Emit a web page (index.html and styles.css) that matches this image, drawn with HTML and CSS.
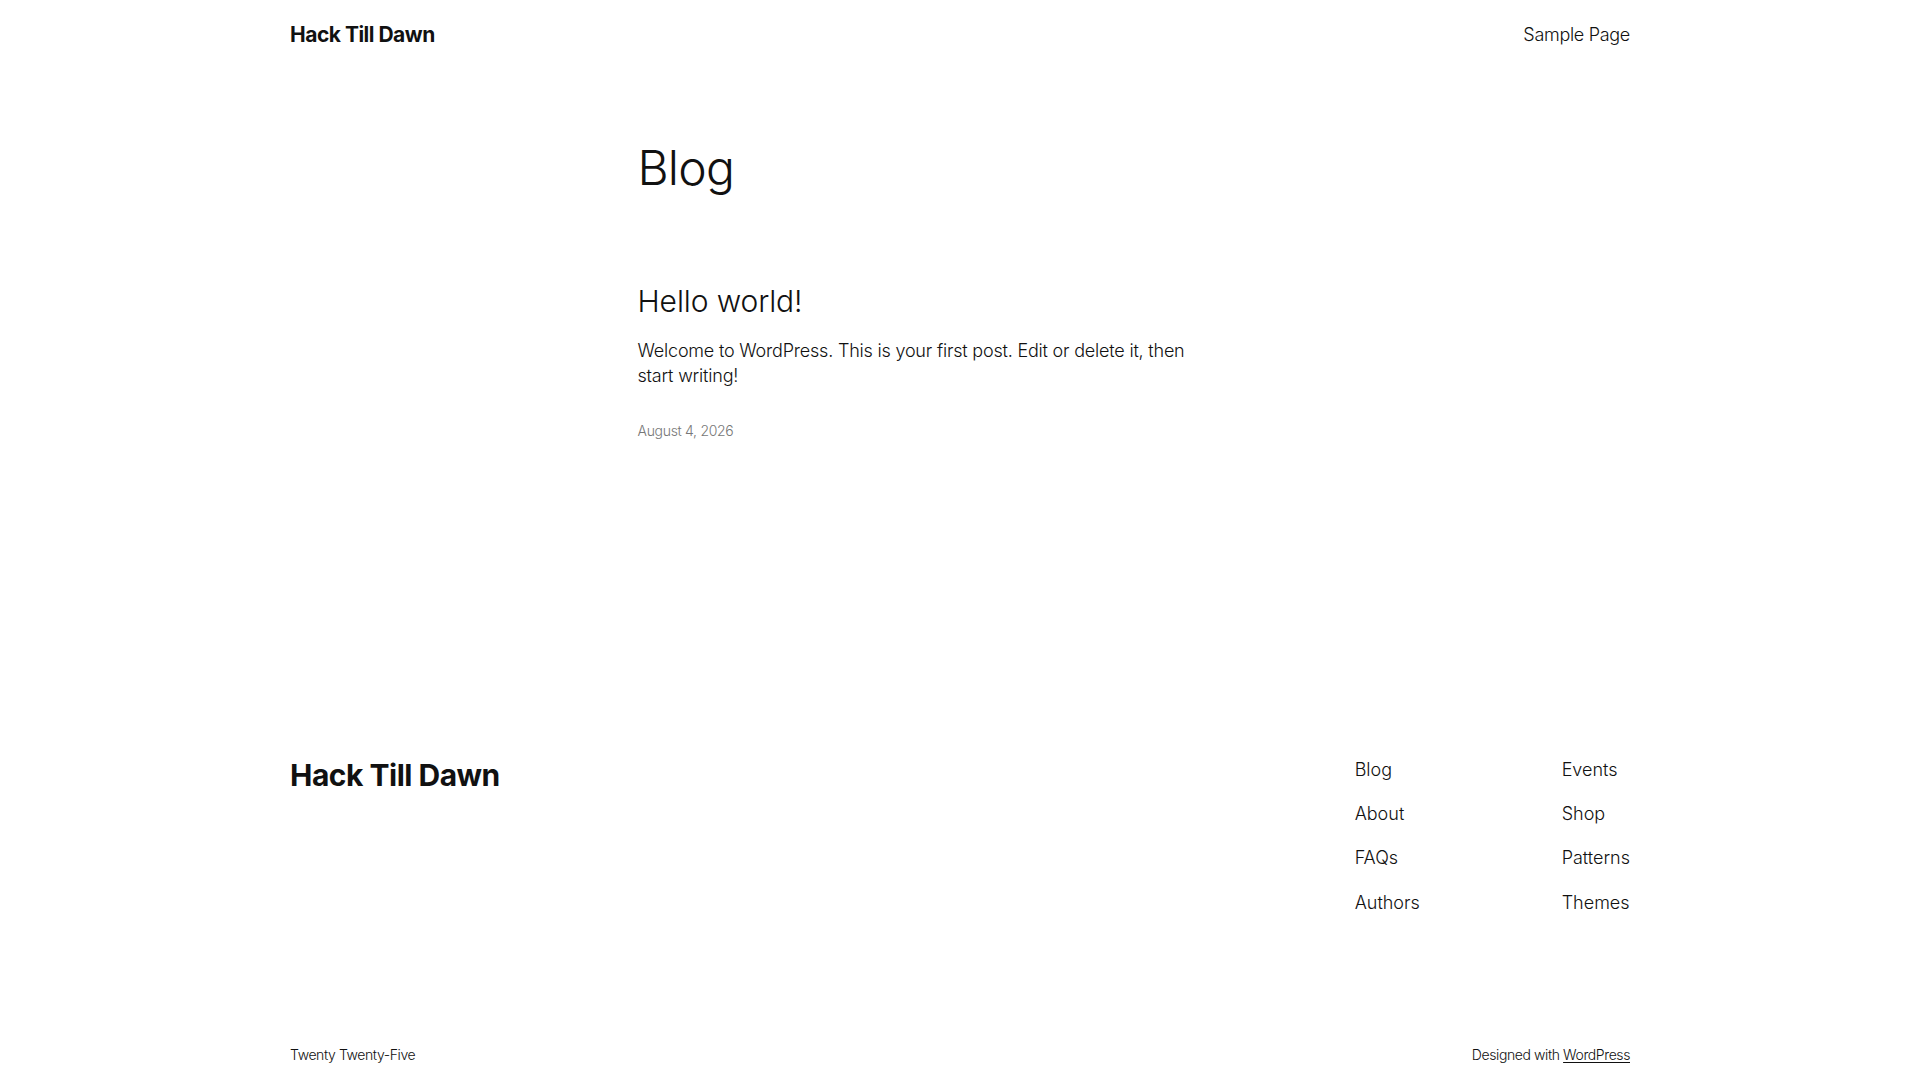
FILE: index.html
```html
<!DOCTYPE html>
<html lang="en">
<head>
<meta charset="utf-8">
<title>Blog – Hack Till Dawn</title>
<link rel="stylesheet" href="styles.css">
</head>
<body>
<header class="site-header">
  <a class="site-title" href="#">Hack Till Dawn</a>
  <nav class="header-nav"><a href="#">Sample Page</a></nav>
</header>
<main class="site-main">
  <h1 class="page-title">Blog</h1>
  <article class="post">
    <h2 class="post-title"><a href="#">Hello world!</a></h2>
    <p class="post-excerpt">Welcome to WordPress. This is your first post. Edit or delete it, then start writing!</p>
    <div class="post-date">August 4, 2026</div>
  </article>
</main>
<footer class="site-footer">
  <div class="footer-top">
    <a class="footer-title" href="#">Hack Till Dawn</a>
    <nav class="footer-nav">
      <ul class="footer-col">
        <li><a href="#">Blog</a></li>
        <li><a href="#">About</a></li>
        <li><a href="#">FAQs</a></li>
        <li><a href="#">Authors</a></li>
      </ul>
      <ul class="footer-col">
        <li><a href="#">Events</a></li>
        <li><a href="#">Shop</a></li>
        <li><a href="#">Patterns</a></li>
        <li><a href="#">Themes</a></li>
      </ul>
    </nav>
  </div>
  <div class="footer-bottom">
    <span class="credit">Twenty Twenty-Five</span>
    <span class="credit">Designed with <a class="wp-link" href="#">WordPress</a></span>
  </div>
</footer>
</body>
</html>
```

FILE: styles.css
```css
* { box-sizing: border-box; }
html, body { margin: 0; padding: 0; background: #fff; }
body {
  font-family: Inter, "Noto Sans", sans-serif;
  font-weight: 300;
  color: #111111;
  -webkit-font-smoothing: antialiased;
}
a { color: inherit; text-decoration: none; }

.site-header {
  width: 1340px;
  margin: 0 auto;
  padding: 20px 0 20px;
  display: flex;
  justify-content: space-between;
  align-items: center;
}
.site-title {
  font-size: 21px;
  line-height: 1.4;
  font-weight: 700;
  letter-spacing: -0.5px;
}
.header-nav a {
  font-size: 18px;
  line-height: 1.4;
  font-weight: 300;
  letter-spacing: -0.3px;
}

.site-main {
  width: 645px;
  margin: 0 auto;
  padding-top: 72px;
}
.page-title {
  margin: 0;
  font-size: 48px;
  line-height: 1.125;
  font-weight: 300;
  letter-spacing: -0.8px;
}
.post { margin-top: 90px; }
.post-title {
  margin: 0;
  font-size: 30px;
  line-height: 1.125;
  font-weight: 300;
  letter-spacing: -0.1px;
}
.post-excerpt {
  max-width: 580px;
  margin: 19px 0 0;
  font-size: 18px;
  line-height: 1.4;
  letter-spacing: -0.2px;
}
.post-date {
  margin-top: 32px;
  font-size: 14px;
  line-height: 1.4;
  letter-spacing: -0.3px;
  color: #777777;
}

.site-footer {
  width: 1340px;
  margin: 0 auto;
  padding-top: 317px;
}
.footer-top {
  display: flex;
  justify-content: space-between;
  align-items: flex-start;
}
.footer-title {
  font-size: 30px;
  line-height: 1.2;
  font-weight: 700;
  letter-spacing: -0.5px;
}
.footer-nav {
  display: grid;
  grid-template-columns: 207px auto;
}
.footer-col {
  list-style: none;
  margin: 0;
  padding: 0;
  display: flex;
  flex-direction: column;
  gap: 19px;
}
.footer-col li {
  font-size: 18px;
  line-height: 1.4;
  letter-spacing: 0;
}
.footer-bottom {
  margin-top: 130px;
  padding-bottom: 16px;
  display: flex;
  justify-content: space-between;
}
.credit {
  font-size: 14px;
  line-height: 1.4;
  letter-spacing: -0.4px;
}
.wp-link {
  text-decoration: underline;
  text-underline-offset: 2px;
}
```
